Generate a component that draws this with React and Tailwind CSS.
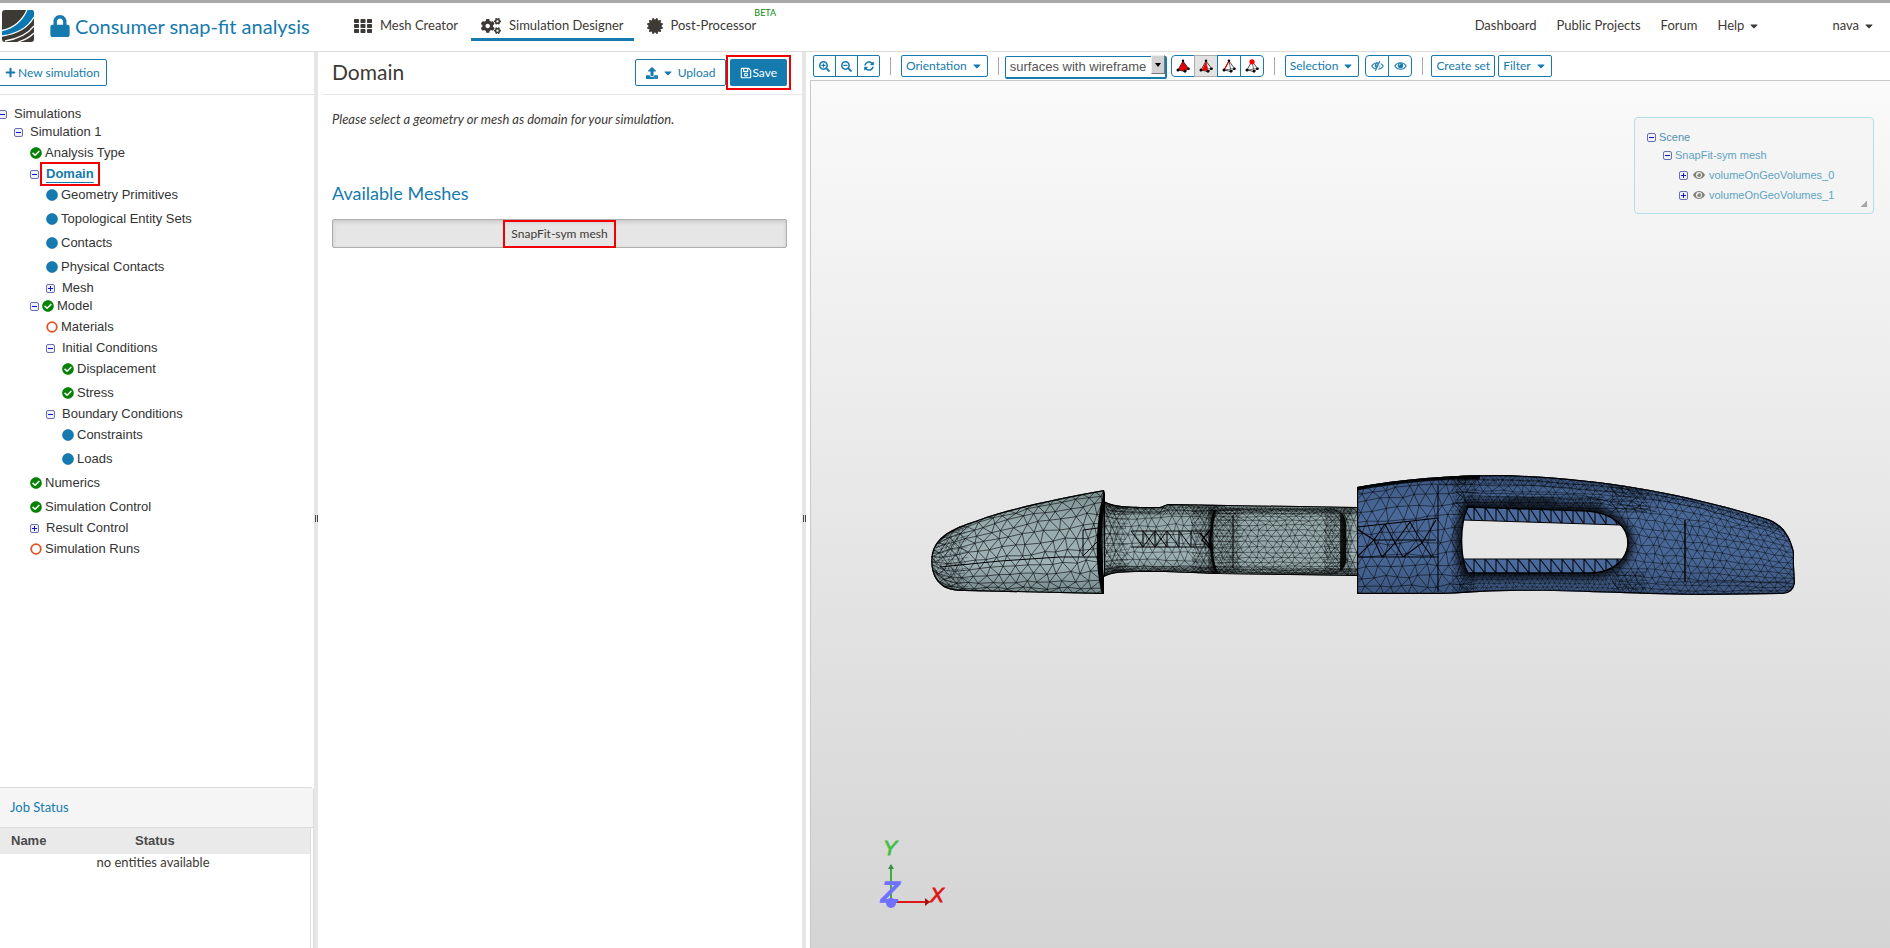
import {useState} from "react";
import {
    FaLock, FaCogs, FaCertificate, FaPlus, FaUpload, FaRegSave, FaCaretDown,
    FaSearchPlus, FaSearchMinus, FaSyncAlt, FaEye, FaCheckCircle, FaCircle
} from "react-icons/fa";

const TREE = [
    {label: "Simulations", depth: 0, toggle: "-"},
    {label: "Simulation 1", depth: 1, toggle: "-"},
    {label: "Analysis Type", depth: 2, status: "done"},
    {label: "Domain", depth: 2, toggle: "-"},
    {label: "Geometry Primitives", depth: 3, status: "info"},
    {label: "Topological Entity Sets", depth: 3, status: "info"},
    {label: "Contacts", depth: 3, status: "info"},
    {label: "Physical Contacts", depth: 3, status: "info"},
    {label: "Mesh", depth: 3, toggle: "+"},
    {label: "Model", depth: 2, toggle: "-", status: "done"},
    {label: "Materials", depth: 3, status: "open"},
    {label: "Initial Conditions", depth: 3, toggle: "-"},
    {label: "Displacement", depth: 4, status: "done"},
    {label: "Stress", depth: 4, status: "done"},
    {label: "Boundary Conditions", depth: 3, toggle: "-"},
    {label: "Constraints", depth: 4, status: "info"},
    {label: "Loads", depth: 4, status: "info"},
    {label: "Numerics", depth: 2, status: "done"},
    {label: "Simulation Control", depth: 2, status: "done"},
    {label: "Result Control", depth: 2, toggle: "+"},
    {label: "Simulation Runs", depth: 2, status: "open"},
];

const INDENT = ["-ml-0.5", "ml-3.5", "ml-[30px]", "ml-[46px]", "ml-[62px]"];

const STATUS_ICON = {
    done: <FaCheckCircle size={12} className="text-[#058205]"/>,
    info: <FaCircle size={12} className="text-[#157aae]"/>,
    open: (
        <svg width="12" height="12" viewBox="0 0 12 12">
            <circle cx="6" cy="6" r="4.800" fill="none" stroke="#e0531f" strokeWidth="1.8"/>
        </svg>
    ),
};

const BTN = "border border-[#157aae] text-[#157aae] bg-white flex items-center justify-center cursor-pointer";

function Toggle({sign}) {
    return (
        <svg width="9" height="9" viewBox="0 0 9 9" className="shrink-0">
            <rect x="0.5" y="0.5" width="8" height="8" rx="1.5" fill="#eef0fb" stroke="#6a6fae"/>
            <path d={sign === "+" ? "M2 4.5h5M4.5 2v5" : "M2 4.5h5"} stroke="#1414c8"/>
        </svg>
    );
}

function Logo() {
    return (
        <svg width="32" height="32" viewBox="0 0 32 32">
            <defs>
                <clipPath id="logoClip"><rect width="32" height="32" rx="3"/></clipPath>
            </defs>
            <g clipPath="url(#logoClip)">
                <rect width="32" height="32" fill="#3d3935"/>
                <path d="M0 20C12 18 20 11 25 0H32V7C27 17 15 24 0 26Z" fill="#0b78b3"/>
                <g fill="none" stroke="#fff" strokeWidth="1.3">
                    <path d="M0 20.500C12 18 20 11 25 0"/>
                    <path d="M0 26C14 24 26 18 32 7"/>
                    <path d="M3 31C16 29 26 24 32 16"/>
                    <path d="M16 32C23 30 28 27 32 23"/>
                </g>
            </g>
        </svg>
    );
}

function GridIcon() {
    return (
        <svg width="18" height="14" viewBox="0 0 18 14" fill="#3d3935">
            {[0, 5, 10].map((y) => [0, 6.5, 13].map((x) => (
                <rect key={x + "-" + y} x={x} y={y} width="5" height="4" rx="0.8"/>
            )))}
        </svg>
    );
}

function EyeIcon({off}) {
    return (
        <svg width="13" height="10" viewBox="0 0 13 10" fill="none" stroke="#157aae" strokeWidth="1.1">
            <path d="M0.800 5C3.500 0.600 9.500 0.600 12.200 5C9.500 9.400 3.500 9.400 0.800 5Z"/>
            <circle cx="6.500" cy="4.600" r="2.700" fill="#157aae" stroke="none"/>
            <path d="M5.200 4.400Q5.300 3.200 6.500 3.100" stroke="#fff" strokeWidth="0.8"/>
            {off && <path d="M9.600 0L5.200 10" stroke="#fff" strokeWidth="2.4"/>}
            {off && <path d="M8.800 0.300L4.400 9.700"/>}
        </svg>
    );
}

function PickIcon({mode}) {
    return (
        <svg width="14" height="14" viewBox="0 0 14 14">
            <path d="M7 2L2 11L9 12.500L12.500 9.500Z" fill={mode === "volume" ? "#f00000" : "#fff"} stroke="#222" strokeWidth="0.8"/>
            {mode === "volume" && <path d="M7 2L9 12.500" stroke="#900" strokeWidth="0.6"/>}
            {mode !== "volume" && <path d="M7 2L9 12.500M2 11L12.500 9.500" stroke="#333" strokeWidth="0.7"/>}
            {mode === "face" && <path d="M7 2L3 11L9 12.500Z" fill="#f00000"/>}
            {mode === "edge" && <path d="M7 2L2.500 10.500" stroke="#f00000" strokeWidth="1.2"/>}
            <circle cx="2" cy="11" r="1.500"/>
            <circle cx="9" cy="12.300" r="1.400"/>
            <circle cx="12.500" cy="9.700" r="1.300"/>
            {mode === "node" ? <circle cx="7" cy="2.800" r="2.600" fill="#f00"/> : <circle cx="7" cy="1.800" r="1.200"/>}
        </svg>
    );
}

// piecewise linear curve through the given points
function curve(points) {
    return (x) => {
        for (let i = 1; i < points.length; i++) {
            const [ax, ay] = points[i - 1];
            const [bx, by] = points[i];
            if (x <= bx) return ay + ((by - ay) * Math.max(0, x - ax)) / (bx - ax);
        }
        return points[points.length - 1][1];
    };
}

// triangle net between two curves, rows get denser near both edges
function triMesh(x0, x1, top, bottom, cell, rows, edge = 0.6, jitter = 0.22) {
    let seed = 7;
    const rand = () => {
        seed = (seed * 16807) % 2147483647;
        return seed / 2147483647 - 0.5;
    };
    const cols = Math.ceil((x1 - x0) / cell) + 1;
    const pts = [];
    for (let j = 0; j <= rows; j++) {
        const t = j / rows;
        const v = (1 - edge) * t + edge * (0.5 - 0.5 * Math.cos(Math.PI * t));
        const row = [];
        for (let i = 0; i <= cols; i++) {
            const x = x0 + (i - (j % 2) * 0.5) * cell + rand() * cell * jitter * 2;
            const h = bottom(x) - top(x);
            const inner = j > 0 && j < rows ? 1 : 0;
            row.push([x, top(x) + h * v + (inner * rand() * jitter * 1.5 * h) / rows]);
        }
        pts.push(row);
    }
    let d = "";
    const line = (a, b) => {
        d += `M${a[0].toFixed(1)} ${a[1].toFixed(1)}L${b[0].toFixed(1)} ${b[1].toFixed(1)}`;
    };
    for (let j = 0; j <= rows; j++) {
        for (let i = 0; i < cols; i++) {
            line(pts[j][i], pts[j][i + 1]);
            if (j < rows) {
                line(pts[j][i], pts[j + 1][i]);
                line(pts[j][i], j % 2 ? pts[j + 1][Math.max(0, i - 1)] : pts[j + 1][i + 1]);
            }
        }
    }
    return d;
}

const flat = (y) => () => y;
const headTop = curve([[928, 545], [938, 538], [952, 529], [980, 519], [1020, 507], [1060, 498], [1106, 490]]);
const headBottom = curve([[928, 570], [938, 584], [955, 591], [1106, 594]]);
const neckTop = curve([[1104, 502], [1115, 506], [1160, 507], [1168, 504], [1360, 507]]);
const neckBottom = curve([[1104, 576], [1115, 572], [1165, 572], [1220, 574], [1360, 576]]);
const clipTop = curve([[1356, 487], [1400, 479], [1440, 476], [1490, 475], [1540, 477], [1620, 484], [1700, 499], [1765, 518], [1800, 530]]);
const clipBottom = curve([[1356, 594], [1440, 594], [1480, 591], [1560, 590], [1640, 593], [1700, 595], [1800, 594]]);

const HEAD = "M1104 490C1060 498 1010 508 978 520C950 529 937 536 932 553C930 564 932 577 940 584C946 590 955 591 965 591L1103 594Z";
const NECK = "M1104 501C1115 507 1130 507 1160 507L1168 504L1358 507V576L1220 574L1165 572C1130 572 1115 571 1104 577Z";
const POCKET = "M1222 509H1332Q1346 511 1346 526V560Q1344 573 1332 574H1222Q1213 572 1213 556V526Q1214 511 1222 509Z";
const BODY = "M1357 487C1400 479 1450 475 1500 475C1600 477 1690 495 1765 518C1782 523 1790 535 1794 552L1794 565L1795 583Q1793 594 1782 594L1700 595C1620 594 1560 590 1510 591C1480 591 1460 594 1440 594H1357Z";
const SLOT = "M1468 507L1588 511C1612 513 1628 526 1628 543C1628 560 1612 573 1590 573H1468C1460 560 1459 525 1468 507Z";
const WINDOW = "M1463 520L1621 525C1630 536 1630 548 1622 559H1463C1460 545 1461 530 1463 520Z";

const MESH = {
    head: triMesh(925, 1108, headTop, headBottom, 12, 11),
    headTip: triMesh(928, 962, headTop, headBottom, 5, 16),
    neck: triMesh(1104, 1215, neckTop, neckBottom, 9, 11, 0.9),
    neckRing: triMesh(1104, 1124, neckTop, neckBottom, 5, 18, 0.9),
    neckEdges: triMesh(1104, 1360, neckTop, curve([[1104, 514], [1360, 514]]), 4, 3, 0) +
        triMesh(1104, 1360, curve([[1104, 566], [1360, 569]]), neckBottom, 4, 3, 0),
    pocket: triMesh(1212, 1348, flat(509), flat(574), 8, 16, 0.7),
    pocketSides: triMesh(1194, 1236, flat(508), flat(574), 4, 20, 0.3) + triMesh(1326, 1348, flat(508), flat(574), 4, 20, 0.3),
    tail: triMesh(1346, 1360, flat(508), flat(575), 7, 8),
    left: triMesh(1354, 1462, clipTop, clipBottom, 12, 11, 0.3),
    arm: triMesh(1462, 1640, clipTop, flat(512), 9, 7, 0.2),
    armLow: triMesh(1462, 1640, flat(572), clipBottom, 5, 5, 0.2),
    right: triMesh(1616, 1800, clipTop, clipBottom, 9, 15, 0.4),
    joint: triMesh(1454, 1472, clipTop, clipBottom, 4, 34, 0.3),
    armEdge: triMesh(1466, 1600, flat(497), flat(511), 3, 5, 0),
    border: triMesh(1440, 1800, clipTop, (x) => clipTop(x) + 9, 5, 2, 0),
    strip: Array.from({length: 16}, (_, i) => {
        const x = 1463 + i * 11;
        return `M${x} 505V526M${x} 507L${x + 11} 524M${x} 559V574M${x} 559L${x + 11} 573`;
    }).join(""),
};

function MeshScene() {
    return (
        <svg viewBox="811 81 1079 867" className="w-full h-full" role="img" aria-label="SnapFit-sym mesh">
            <defs>
                <linearGradient id="grey" x1="0" y1="0" x2="0" y2="1">
                    <stop offset="0" stopColor="#7b8e8f"/>
                    <stop offset="0.3" stopColor="#96aaac"/>
                    <stop offset="0.7" stopColor="#9fb3b7"/>
                    <stop offset="1" stopColor="#74878a"/>
                </linearGradient>
                <linearGradient id="blue" x1="0" y1="0" x2="0" y2="1">
                    <stop offset="0" stopColor="#3c5680"/>
                    <stop offset="0.3" stopColor="#4a6998"/>
                    <stop offset="0.7" stopColor="#486695"/>
                    <stop offset="1" stopColor="#3b547c"/>
                </linearGradient>
                <filter id="soft" x="-50%" y="-20%" width="200%" height="140%"><feGaussianBlur stdDeviation="3"/></filter>
                <clipPath id="cHead"><path d={HEAD}/></clipPath>
                <clipPath id="cNeck"><path d={NECK}/></clipPath>
                <clipPath id="cPocket"><path d={POCKET}/></clipPath>
                <clipPath id="cBody"><path d={BODY}/></clipPath>
                <clipPath id="cSlot"><path d={SLOT}/></clipPath>
            </defs>

            <g clipPath="url(#cNeck)" fill="none" stroke="#000">
                <path d={NECK} fill="url(#grey)" strokeWidth="2"/>
                <path d={MESH.neck} strokeWidth="0.6" opacity="0.75"/>
                <path d={MESH.neckRing} strokeWidth="0.5" opacity="0.7"/>
                <path d={MESH.tail} strokeWidth="0.6" opacity="0.8"/>
                <path d="M1131 531H1213M1131 547H1213M1131 531L1143 547V531L1155 547V531L1167 547V531L1179 547V531L1191 547V531M1143 547L1155 531M1155 547L1167 531" strokeWidth="1"/>
                <path d="M1211 508C1218 525 1206 538 1213 550C1216 560 1212 567 1216 575" strokeWidth="9" opacity="0.7" filter="url(#soft)"/>
                <path d={POCKET} fill="#95a9ab" stroke="none"/>
                <g clipPath="url(#cPocket)">
                    <path d={MESH.pocket} strokeWidth="0.6" opacity="0.75"/>
                    <path d="M1344 509C1346 530 1346 550 1342 575" strokeWidth="15" opacity="0.9" filter="url(#soft)"/>
                    <path d="M1213 509V575" strokeWidth="8" opacity="0.5" filter="url(#soft)"/>
                </g>
                <path d={MESH.pocketSides} strokeWidth="0.5" opacity="0.6"/>
                <path d={MESH.neckEdges} strokeWidth="0.5" opacity="0.7"/>
                <path d={POCKET} strokeWidth="1" opacity="0.6"/>
                <path d="M1215 510C1210 522 1213 530 1210 539C1212 548 1211 562 1217 573" strokeWidth="2.5" opacity="0.85"/>
                <path d="M1200 533L1211 547M1210 530L1202 540L1212 550" strokeWidth="1.4"/>
                <path d="M1233 515V568" strokeWidth="1"/>
            </g>

            <path d={HEAD} fill="url(#grey)"/>
            <g clipPath="url(#cHead)" fill="none" stroke="#000">
                <path d={MESH.head} strokeWidth="0.7" opacity="0.85"/>
                <path d={MESH.headTip} strokeWidth="0.5" opacity="0.6"/>
                <path d="M940 567L1000 561L1060 557H1098M1083 530V556L1098 541M1083 530L1098 528" strokeWidth="1"/>
                <path d={HEAD} strokeWidth="2.4"/>
            </g>
            <path d="M1105 490C1094 520 1095 570 1102 594H1104V576C1101 560 1101 520 1105 504Z" fill="#000"/>

            <path d={BODY} fill="url(#blue)"/>
            <g clipPath="url(#cBody)" fill="none" stroke="#000">
                <path d={MESH.left} strokeWidth="0.7" opacity="0.75"/>
                <path d="M1357 527L1385 524L1438 518M1357 557H1438M1438 485V592M1357 557L1374 540L1385 524L1395 543L1410 522L1422 543L1436 520M1357 529L1374 540L1382 557L1395 543L1403 557L1422 543L1432 557M1374 540H1436" strokeWidth="1.1"/>
                <path d={MESH.arm} strokeWidth="0.6" opacity="0.75"/>
                <path d={MESH.armLow} strokeWidth="0.5" opacity="0.75"/>
                <path d={MESH.armEdge} strokeWidth="0.5" opacity="0.6"/>
                <path d={MESH.right} strokeWidth="0.6" opacity="0.75"/>
                <path d={MESH.joint} strokeWidth="0.4" opacity="0.55"/>
                <path d={MESH.border} strokeWidth="0.5" opacity="0.6"/>
                <path d="M1470 493L1580 495L1657 512M1657 582H1790" strokeWidth="0.8" opacity="0.6"/>
                <path d="M1685 520V582" strokeWidth="1.4"/>
                <path d="M1505 503Q1530 494 1555 504" strokeWidth="5" opacity="0.7" filter="url(#soft)"/>
                <path d={SLOT} strokeWidth="12" opacity="0.7" filter="url(#soft)"/>
                <path d="M1357 487C1400 479 1450 475 1480 476" strokeWidth="7" opacity="0.9"/>
                <path d={BODY} strokeWidth="2.4"/>
            </g>
            <g clipPath="url(#cSlot)">
                <path d={SLOT} fill="#4a6a9d"/>
                <path d={MESH.strip} fill="none" stroke="#000" strokeWidth="1.2" opacity="0.85"/>
                <path d={WINDOW} fill="#e6e6e6" stroke="#000" strokeWidth="1"/>
            </g>
            <path d={SLOT} fill="none" stroke="#000" strokeWidth="1.4"/>

            <path d="M891 903V868" stroke="#3fae3f" strokeWidth="2"/>
            <path d="M888 869L891 864L894 869Z" fill="#3a8f3f"/>
            <path d="M891 902H927" stroke="#e01414" strokeWidth="2"/>
            <path d="M925 898L930 902L925 906Z" fill="#a01010"/>
            <circle cx="891" cy="903" r="5" fill="#7070ff"/>
            <g fontFamily="Liberation Sans" fontStyle="italic" strokeWidth="0.8">
                <text x="883" y="855" fontSize="21" fill="#3fc03f" stroke="#3fc03f">Y</text>
                <text x="881" y="902" fontSize="30" fill="#7070ff" stroke="#7070ff" strokeWidth="1.5">Z</text>
                <text x="930" y="902" fontSize="21" fill="#e01414" stroke="#e01414">X</text>
            </g>
        </svg>
    );
}

function Tab({icon, label, active, badge}) {
    return (
        <a href="#" className={`relative h-[38px] pt-2.5 px-2.5 flex items-center gap-2 text-[13px] text-[#3d3935] border-b-3 ${active ? "border-[#157aae]" : "border-transparent"}`}>
            {icon}{label}
            {badge && <span className="absolute top-0.5 left-full -ml-3 text-[9px] leading-4 text-[#0a8a0a]">{badge}</span>}
        </a>
    );
}

function Header() {
    return (
        <header className="flex items-start h-[52px] shrink-0 border-b border-[#dcdcdc] border-t-3 border-t-[#a8a8a8] bg-white">
            <div className="flex items-center w-[344px] pl-0.5 pt-[7px]">
                <Logo/>
                <FaLock size={22} className="ml-[15px] text-[#157aae]"/>
                <h1 className="ml-1 text-[20px] leading-8 text-[#157aae] whitespace-nowrap">Consumer snap-fit analysis</h1>
            </div>
            <nav className="flex gap-[3px]">
                <Tab icon={<GridIcon/>} label="Mesh Creator"/>
                <Tab icon={<FaCogs size={20}/>} label="Simulation Designer" active/>
                <Tab icon={<FaCertificate size={16}/>} label="Post-Processor" badge="BETA"/>
            </nav>
            <nav className="ml-auto flex items-center h-[46px] gap-5 pr-[15px] text-[13px] text-[#3d3935]">
                <a href="#">Dashboard</a>
                <a href="#">Public Projects</a>
                <a href="#">Forum</a>
                <a href="#" className="flex items-center gap-1">Help <FaCaretDown size={12}/></a>
                <a href="#" className="flex items-center gap-1 ml-[52px]">nava <FaCaretDown size={12}/></a>
            </nav>
        </header>
    );
}

function Splitter() {
    return (
        <div className="w-1 shrink-0 bg-[#e6e6e6] flex items-center justify-center gap-px pt-9">
            <span className="w-px h-[7px] bg-[#444]"/>
            <span className="w-px h-[7px] bg-[#444]"/>
        </div>
    );
}

function TreeRow({item, active, onSelect}) {
    return (
        <li className={`flex items-center ${INDENT[item.depth]} ${item.toggle ? "h-[18px]" : "h-6"}`}>
            {item.toggle && <button aria-label={"Toggle " + item.label} className="cursor-pointer"><Toggle sign={item.toggle}/></button>}
            {item.status && <span className={item.toggle ? "ml-[3px]" : ""}>{STATUS_ICON[item.status]}</span>}
            <button
                onClick={onSelect}
                className={`relative cursor-pointer leading-4 ${item.status ? "ml-[3px]" : "ml-[7px]"} ${active ? "font-bold text-[#157aae] underline underline-offset-4" : ""}`}
            >
                {item.label}
                {active && <span className="absolute -inset-x-1.5 -inset-y-1 border-2 border-[#f00000]"/>}
            </button>
        </li>
    );
}

function Sidebar() {
    const [selected, setSelected] = useState("Domain");

    return (
        <aside className="w-[314px] shrink-0 flex flex-col">
            <div className="h-[43px] pb-px shrink-0 flex items-center border-b border-[#e2e2e2]">
                <button className={`${BTN} h-[27px] -ml-0.5 px-1.5 rounded-xs text-xs`}><FaPlus size={11} className="mr-0.5"/>New simulation</button>
            </div>
            <ul className="flex-1 min-h-0 pt-2.5 font-['Liberation_Sans',sans-serif] text-[13px] text-[#333]">
                {TREE.map((item) => (
                    <TreeRow key={item.label} item={item} active={selected === item.label} onSelect={() => setSelected(item.label)}/>
                ))}
            </ul>
            <section className="h-[161px] shrink-0 flex flex-col border-t border-r border-[#dcdcdc] rounded-tr-sm">
                <h2 className="h-10 flex items-center px-2.5 bg-[#f5f5f5] border-b border-[#dcdcdc] text-[13px] text-[#157aae]">Job Status</h2>
                <div className="flex-1 mr-0.5 border-r border-[#dcdcdc]">
                    <table className="w-full text-[13px] text-[#3d3935]">
                        <thead>
                            <tr className="h-[26px] bg-[#eaeaea] text-left font-['Liberation_Sans',sans-serif] text-[13px] text-[#4a4a4a]">
                                <th className="pl-[11px] w-[135px]">Name</th>
                                <th>Status</th>
                            </tr>
                        </thead>
                        <tbody>
                            <tr><td colSpan="2" className="pr-1 text-center leading-4">no entities available</td></tr>
                        </tbody>
                    </table>
                </div>
            </section>
        </aside>
    );
}

function DomainPanel() {
    return (
        <main className="w-[484px] shrink-0 text-[#3d3935]">
            <div className="h-[43px] pb-px ml-1 pl-2.5 pr-[15px] flex items-center border-b border-[#e8e8e8]">
                <h2 className="text-[21px] leading-7 pb-0.5">Domain</h2>
                <button className={`${BTN} ml-auto h-[27px] px-2.5 gap-1 rounded-xs text-xs`}><FaUpload size={12}/><FaCaretDown size={12}/>Upload</button>
                <button className="relative ml-1 h-[27px] px-2.5 flex items-center rounded-xs text-xs bg-[#157aae] text-white cursor-pointer">
                    <FaRegSave size={12}/>Save
                    <span className="absolute -inset-1 border-2 border-[#f00000]"/>
                </button>
            </div>
            <div className="pl-3.5 pr-[15px] pt-3.5">
                <p className="italic text-[13px] leading-5">Please select a geometry or mesh as domain for your simulation.</p>
                <h3 className="mt-[52px] text-lg leading-6 text-[#157aae]">Available Meshes</h3>
                <button className="mt-3.5 h-[29px] w-full flex items-center justify-center rounded-xs border border-[#adadad] bg-[#e6e6e6] shadow-[inset_0_2px_4px_rgba(0,0,0,0.13)] text-xs cursor-pointer">
                    <span className="relative">
                        SnapFit-sym mesh
                        <span className="absolute -inset-x-2 -inset-y-1.5 border-2 border-[#f00000]"/>
                    </span>
                </button>
            </div>
        </main>
    );
}

function Divider() {
    return <span className="w-px h-[18px] mx-2.5 bg-[#aaa]"/>;
}

function Toolbar() {
    const small = `${BTN} h-[22px] w-[23px] -ml-px`;
    const menu = `${BTN} h-[22px] px-1 gap-1 rounded-xs text-xs`;
    return (
        <div className="h-7 shrink-0 flex items-center pl-[7px]">
            <div className="flex pl-px">
                <button aria-label="Zoom in" className={`${small} rounded-l-xs`}><FaSearchPlus size={11}/></button>
                <button aria-label="Zoom out" className={small}><FaSearchMinus size={11}/></button>
                <button aria-label="Reset view" className={`${small} rounded-r-xs`}><FaSyncAlt size={10}/></button>
            </div>
            <Divider/>
            <button className={menu}>Orientation <FaCaretDown size={12}/></button>
            <Divider/>
            <div className="relative -ml-1">
                <select aria-label="Render mode" className="appearance-none h-[23px] w-[162px] pl-1 border border-r-2 border-b-2 border-[#157aae] rounded-xs bg-white font-['Liberation_Sans',sans-serif] text-[13px] text-[#555]">
                    <option>surfaces with wireframe</option>
                    <option>surfaces</option>
                    <option>wireframe</option>
                </select>
                <span className="absolute right-0.5 top-0.5 w-3.5 h-[19px] flex items-center justify-center bg-[#d2d2d2] border border-r-[#777] border-b-[#777] border-[#eee] pointer-events-none">
                    <svg width="6" height="4" viewBox="0 0 6 4"><path d="M0 0H6L3 4Z"/></svg>
                </span>
            </div>
            <div className="flex ml-1">
                {["volume", "face", "edge", "node"].map((mode, i) => (
                    <button key={mode} aria-label={"Pick " + mode}
                            className={`h-[22px] w-6 -ml-px first:ml-0 flex items-center justify-center border cursor-pointer first:rounded-l-sm last:rounded-r-sm
                                    ${i === 1 ? "bg-[#e2e2e2] border-[#adadad]" : "bg-white border-[#157aae]"}`}>
                        <PickIcon mode={mode}/>
                    </button>
                ))}
            </div>
            <Divider/>
            <button className={menu}>Selection <FaCaretDown size={12}/></button>
            <div className="flex ml-1.5">
                <button aria-label="Hide" className={`${BTN} h-[22px] w-6 rounded-l-sm`}><EyeIcon off/></button>
                <button aria-label="Show" className={`${BTN} h-[22px] w-6 -ml-px rounded-r-sm`}><EyeIcon/></button>
            </div>
            <Divider/>
            <button className={`${menu} -ml-0.5`}>Create set</button>
            <button className={`${menu} ml-[3px]`}>Filter <FaCaretDown size={12}/></button>
        </div>
    );
}

function ScenePanel() {
    return (
        <div className="absolute right-4 top-9 w-60 h-[97px] pt-2.5 pl-3 border border-[#b5dde9] rounded-sm bg-[#f4f4f4]/60 font-['Liberation_Sans',sans-serif] text-[11px] text-[#5fa3c2]">
            <div className="flex items-center h-[18px] gap-[3px] text-[#4f93b2]"><Toggle sign="-"/>Scene</div>
            <div className="flex items-center h-[19px] gap-[3px] ml-4"><Toggle sign="-"/>SnapFit-sym mesh</div>
            {[0, 1].map((n) => (
                <div key={n} className="flex items-center h-5 ml-8">
                    <Toggle sign="+"/>
                    <FaEye size={12} className="ml-[5px] mr-1 text-[#85857d]"/>volumeOnGeoVolumes_{n}
                </div>
            ))}
            <svg width="6" height="6" className="absolute right-1.5 bottom-1.5"><path d="M6 0V6H0Z" fill="#aaa" stroke="#888" strokeWidth="0.5"/></svg>
        </div>
    );
}

export default function App() {
    return (
        <div className="h-screen flex flex-col overflow-hidden bg-white font-[Lato,sans-serif]">
            <Header/>
            <div className="flex flex-1 min-h-0">
                <Sidebar/>
                <Splitter/>
                <DomainPanel/>
                <Splitter/>
                <section className="flex-1 min-w-0 flex flex-col">
                    <Toolbar/>
                    <div className="relative flex-1 min-h-0 ml-1 border-t border-l border-[#c8c8c8] bg-linear-to-b from-[#fafafa] to-[#d4d4d4]">
                        <MeshScene/>
                        <ScenePanel/>
                    </div>
                </section>
            </div>
        </div>
    );
}
